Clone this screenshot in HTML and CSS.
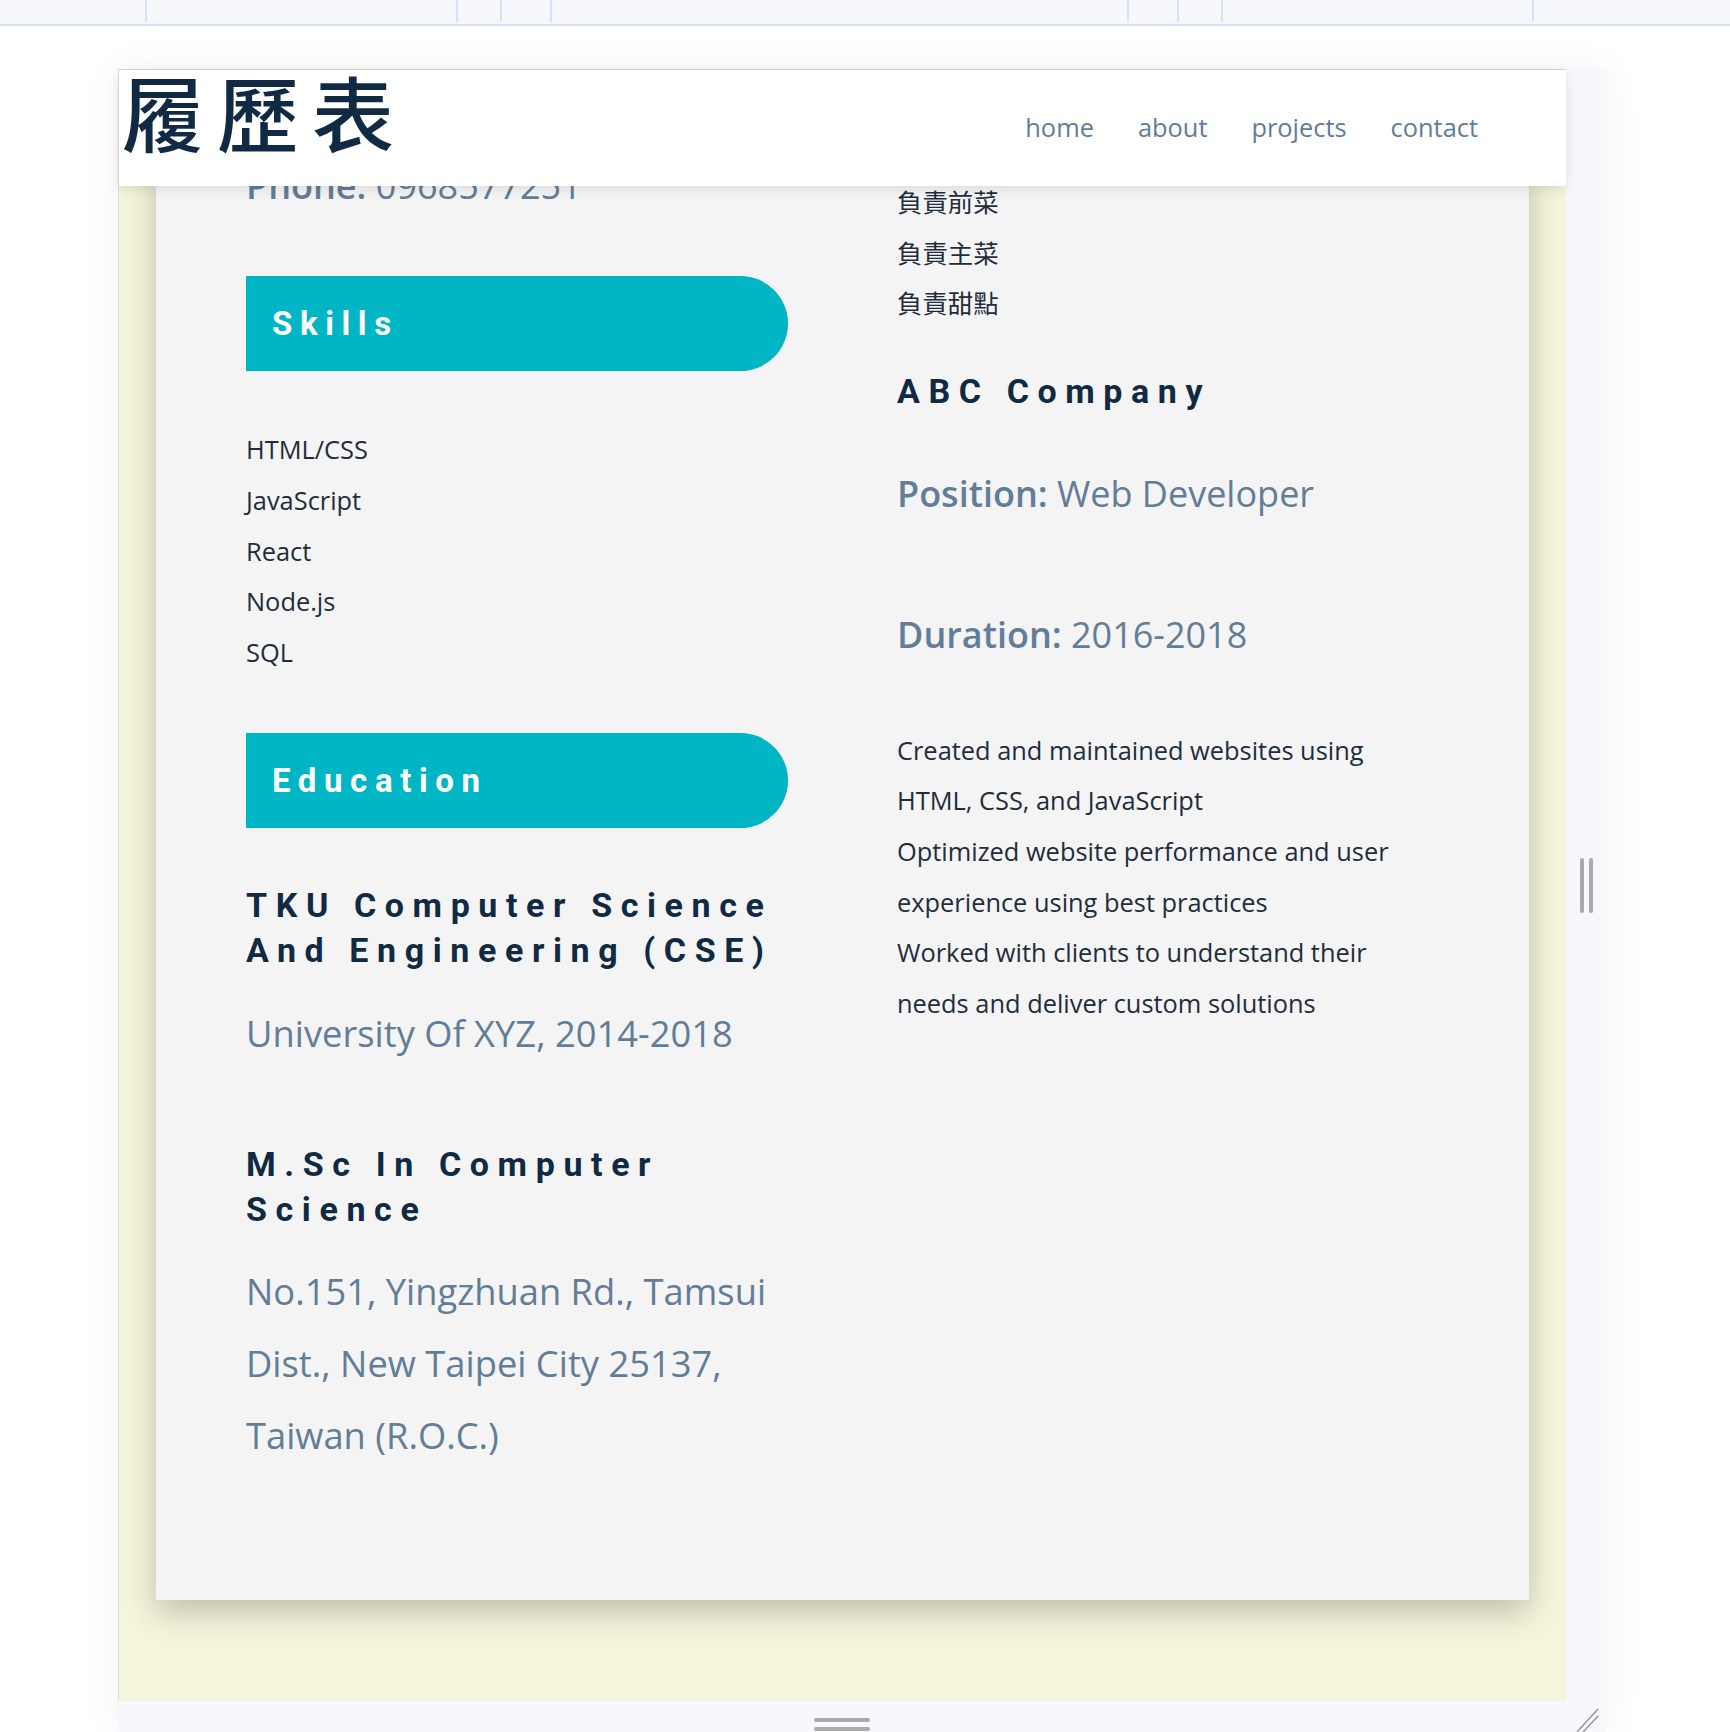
FILE: index.html
```html
<!DOCTYPE html>
<html lang="zh-Hant">
<head>
    <meta charset="UTF-8">
    <meta name="viewport" content="width=device-width, initial-scale=1.0">
    <title>履歷表</title>
    <link rel="stylesheet" href="styles.css">
</head>
<body>
    <div class="toolbar">
        <span></span><span></span><span></span><span></span><span></span>
        <span></span><span></span><span></span><span></span>
    </div>

    <div class="frame">
        <div class="frame-row">
            <div class="preview">
                <header class="site-header">
                    <h1 class="logo">履歷表</h1>
                    <nav class="nav">
                        <a href="#">home</a>
                        <a href="#">about</a>
                        <a href="#">projects</a>
                        <a href="#">contact</a>
                    </nav>
                </header>

                <div class="viewport">
                    <main class="resume">
                        <section class="col col-left">
                            <p class="info phone"><strong>Phone:</strong> 0968577251</p>

                            <h2 class="pill">Skills</h2>
                            <ul class="plain-list skills">
                                <li>HTML/CSS</li>
                                <li>JavaScript</li>
                                <li>React</li>
                                <li>Node.js</li>
                                <li>SQL</li>
                            </ul>

                            <h2 class="pill pill-edu">Education</h2>
                            <h3 class="item-title first">TKU Computer Science And Engineering (CSE)</h3>
                            <p class="item-sub">University Of XYZ, 2014-2018</p>

                            <h3 class="item-title second">M.Sc In Computer Science</h3>
                            <p class="item-sub address">No.151, Yingzhuan Rd., Tamsui Dist., New Taipei City 25137, Taiwan (R.O.C.)</p>
                        </section>

                        <section class="col col-right">
                            <ul class="plain-list duties">
                                <li>負責前菜</li>
                                <li>負責主菜</li>
                                <li>負責甜點</li>
                            </ul>

                            <h3 class="item-title company">ABC Company</h3>
                            <p class="info position"><strong>Position:</strong> Web Developer</p>
                            <p class="info duration"><strong>Duration:</strong> 2016-2018</p>

                            <ul class="plain-list tasks">
                                <li>Created and maintained websites using HTML, CSS, and JavaScript</li>
                                <li>Optimized website performance and user experience using best practices</li>
                                <li>Worked with clients to understand their needs and deliver custom solutions</li>
                            </ul>
                        </section>
                    </main>
                </div>
            </div>

            <div class="side-handle"><span></span><span></span></div>
        </div>

        <div class="bottom-handle">
            <div class="grip"><span></span><span></span></div>
            <div class="corner">
                <svg width="41" height="31" viewBox="0 0 41 31">
                    <line x1="11" y1="31" x2="32" y2="8" stroke="#9a9a9a" stroke-width="1.6"/>
                    <line x1="17" y1="31" x2="32" y2="15" stroke="#9a9a9a" stroke-width="1.6"/>
                </svg>
            </div>
        </div>
    </div>
</body>
</html>
```

FILE: styles.css
```css
/* Базовый стиль */
body {
    margin: 0;
    background-color: #ffffff;
    font-family: 'Open Sans', 'Noto Sans CJK TC', sans-serif;
    overflow: hidden;
}

/* Верхняя панель редактора */
.toolbar {
    display: grid;
    grid-template-columns: 147px 311px 44px 50px 577px 50px 44px 311px 1fr;
    height: 24px;
    background-color: #f6f8fc;
    border-bottom: 2px solid #d6e2f8;
}

.toolbar span {
    height: 22px;
    border-right: 2px solid #d6e2f8;
}

.toolbar span:last-child {
    border-right: none;
}

/* Рамка превью */
.frame {
    margin: 43px 0 0 118px;
    width: 1489px;
    box-shadow: 0 0 40px rgba(0, 0, 0, 0.05);
}

.frame-row {
    display: flex;
}

.preview {
    width: 1447px;
    border-top: 1px solid #d9d9d9;
    border-left: 1px solid #dddddd;
    display: flex;
    flex-direction: column;
}

.side-handle {
    width: 41px;
    background-color: #f7f8fc;
    display: flex;
    justify-content: center;
    align-items: center;
    gap: 5px;
}

.side-handle span {
    width: 4px;
    height: 55px;
    border-radius: 2px;
    background-color: #aaaaaa;
}

.bottom-handle {
    display: flex;
    height: 31px;
    background-color: #f7f8fc;
}

.grip {
    width: 1448px;
    display: flex;
    flex-direction: column;
    align-items: center;
    gap: 5px;
    padding-top: 17px;
    box-sizing: border-box;
}

.grip span {
    width: 56px;
    height: 4px;
    border-radius: 2px;
    background-color: #aaaaaa;
}

.corner {
    width: 41px;
}

.corner svg {
    display: block;
}

/* Шапка сайта */
.site-header {
    position: relative;
    z-index: 1;
    height: 116px;
    display: flex;
    justify-content: space-between;
    align-items: flex-start;
    padding: 0 88px 0 3px;
    background-color: #ffffff;
    box-shadow: 0 3px 12px rgba(0, 0, 0, 0.1);
}

.logo {
    margin: 0;
    font-family: 'Noto Sans CJK TC', sans-serif;
    font-size: 82px;
    font-weight: 500;
    line-height: 1;
    letter-spacing: 13px;
    color: #102a43;
}

.nav {
    display: flex;
    gap: 44px;
    margin-top: 40px;
}

.nav a {
    font-size: 25.4px;
    color: #627d98;
    text-decoration: none;
}

/* Область прокрутки */
.viewport {
    height: 1515px;
    overflow: hidden;
    background-color: #f5f5dc;
    padding: 0 37px;
}

.resume {
    margin-top: -31px;
    display: grid;
    grid-template-columns: 542px 1fr;
    column-gap: 109px;
    align-items: start;
    padding: 0 122px 129px 90px;
    background-color: #f4f4f4;
    box-shadow: 0 12px 30px rgba(0, 0, 0, 0.22);
}

.info {
    margin: 0;
    font-size: 36px;
    line-height: 70px;
    color: #627d98;
}

.info strong {
    font-weight: 600;
}

.phone {
    margin-top: -4px;
}

.pill {
    height: 95px;
    margin: 55px 0 0;
    padding-left: 26px;
    display: flex;
    align-items: center;
    background-color: #00b5c4;
    border-radius: 0 48px 48px 0;
    color: #ffffff;
    font-family: 'Roboto', sans-serif;
    font-size: 33px;
    font-weight: 700;
    letter-spacing: 7.6px;
}

.pill-edu {
    margin-top: 55px;
}

.plain-list {
    list-style: none;
    margin: 0;
    padding: 0;
    font-size: 25.4px;
    color: #1f2d3d;
}

.skills {
    margin-top: 53px;
    line-height: 50.8px;
}

.item-title {
    margin: 0;
    font-family: 'Roboto', sans-serif;
    font-size: 34px;
    font-weight: 700;
    line-height: 45px;
    letter-spacing: 8.6px;
    color: #102a43;
}

.item-title.first {
    margin-top: 55px;
}

.item-title.second {
    margin-top: 73px;
}

.item-sub {
    margin: 24px 0 0;
    font-size: 36.3px;
    line-height: 72px;
    color: #627d98;
}

.item-sub.address {
    margin-top: 23px;
}

/* Правая колонка */
.duties {
    margin-top: 22px;
    line-height: 50.6px;
}

.item-title.company {
    margin-top: 40px;
}

.position {
    margin-top: 45px;
}

.duration {
    margin-top: 71px;
}

.tasks {
    margin-top: 55px;
    line-height: 50.6px;
}
```
